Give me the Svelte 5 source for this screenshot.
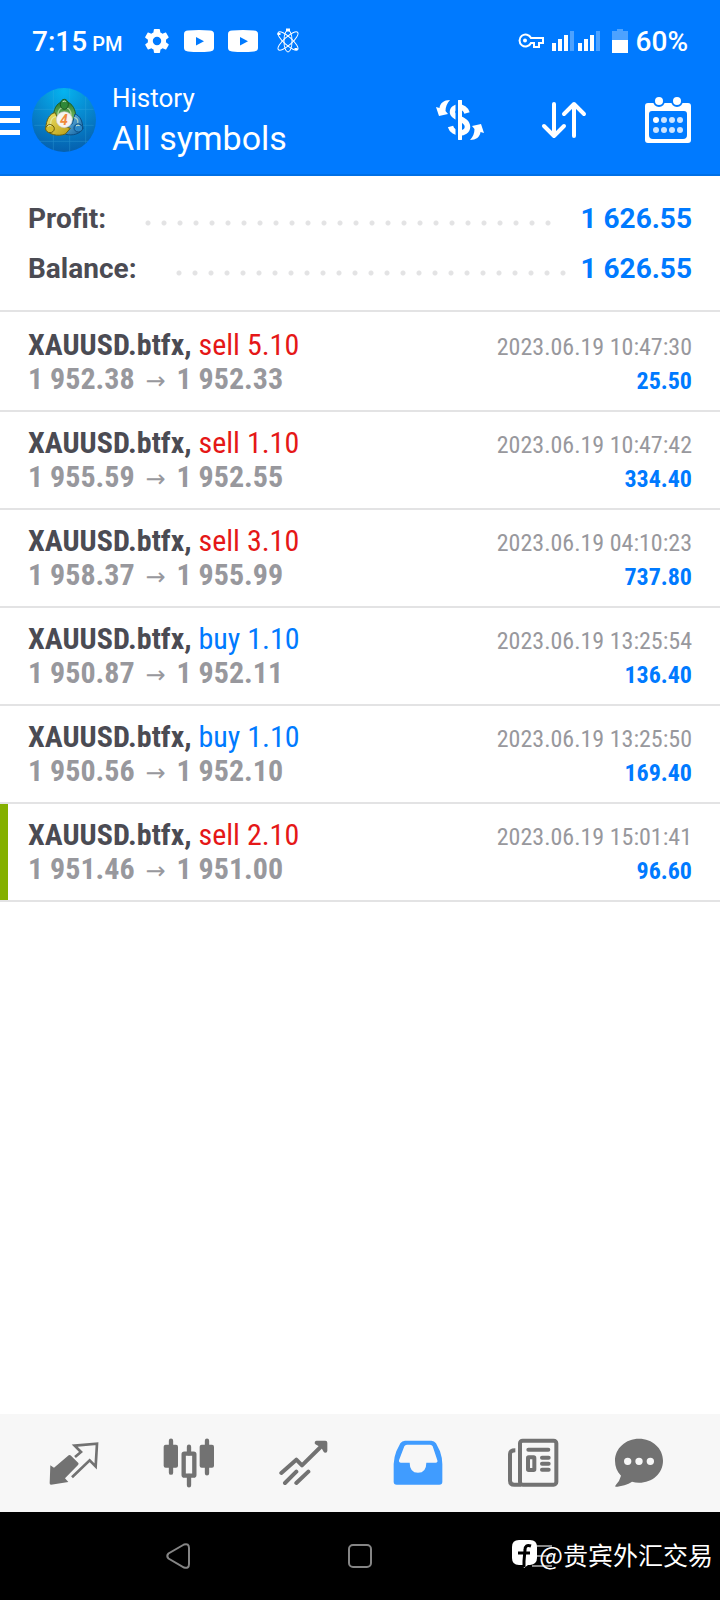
<script lang="ts">
  interface Deal {
    symbol: string;
    side: 'buy' | 'sell';
    volume: string;
    open: string;
    close: string;
    time: string;
    profit: string;
    marked?: boolean;
  }

  const DOT_STEP = 16;

  const totals = [
    { label: 'Profit:', value: '1 626.55', dots: 26 },
    { label: 'Balance:', value: '1 626.55', dots: 25 },
  ];

  const deals: Deal[] = [
    { symbol: 'XAUUSD.btfx', side: 'sell', volume: '5.10', open: '1 952.38', close: '1 952.33', time: '2023.06.19 10:47:30', profit: '25.50' },
    { symbol: 'XAUUSD.btfx', side: 'sell', volume: '1.10', open: '1 955.59', close: '1 952.55', time: '2023.06.19 10:47:42', profit: '334.40' },
    { symbol: 'XAUUSD.btfx', side: 'sell', volume: '3.10', open: '1 958.37', close: '1 955.99', time: '2023.06.19 04:10:23', profit: '737.80' },
    { symbol: 'XAUUSD.btfx', side: 'buy', volume: '1.10', open: '1 950.87', close: '1 952.11', time: '2023.06.19 13:25:54', profit: '136.40' },
    { symbol: 'XAUUSD.btfx', side: 'buy', volume: '1.10', open: '1 950.56', close: '1 952.10', time: '2023.06.19 13:25:50', profit: '169.40' },
    { symbol: 'XAUUSD.btfx', side: 'sell', volume: '2.10', open: '1 951.46', close: '1 951.00', time: '2023.06.19 15:01:41', profit: '96.60', marked: true },
  ];

  const tabs = ['Quotes', 'Charts', 'Trade', 'History', 'News', 'Messages'];
  let activeTab = $state('History');
</script>

<div class="screen">
  <header>
    <div class="status">
      <div class="status-left">
        <span class="clock">7:15<small>PM</small></span>
        <svg width="26" height="26" viewBox="1.2 1.2 21.6 21.6" fill="#fff" aria-hidden="true">
          <path d="M19.4 13c0-.3.1-.6.1-1s0-.7-.1-1l2.1-1.7c.2-.1.3-.4.1-.6l-2-3.5c-.1-.2-.4-.3-.6-.2l-2.5 1c-.5-.4-1.1-.7-1.7-1l-.4-2.6c0-.2-.2-.4-.5-.4h-4c-.2 0-.5.2-.5.4l-.4 2.6c-.6.3-1.2.6-1.7 1l-2.5-1c-.2-.1-.5 0-.6.2l-2 3.5c-.1.2-.1.5.1.6L4.5 11c0 .3-.1.6-.1 1s0 .7.1 1l-2.1 1.7c-.2.1-.3.4-.1.6l2 3.5c.1.2.4.3.6.2l2.5-1c.5.4 1.1.7 1.7 1l.4 2.6c0 .2.3.4.5.4h4c.3 0 .5-.2.5-.4l.4-2.6c.6-.3 1.2-.6 1.7-1l2.5 1c.2.1.5 0 .6-.2l2-3.5c.1-.2.1-.5-.1-.6L19.4 13zM12 15.5a3.5 3.5 0 1 1 0-7 3.5 3.5 0 0 1 0 7z" />
        </svg>
        {#each [0, 1] as n (n)}
          <svg width="30" height="22" viewBox="0 0 30 22" aria-hidden="true">
            <path d="M4 .5Q15-.5 26 .5Q30 .8 30 4V18Q30 21 26 21.5Q15 22.500 4 21.500Q0 21 0 18V4Q0 .8 4 .5ZM12 7V15.500L20 11.200Z" fill="#fff" />
          </svg>
        {/each}
        <svg class="atom" width="24" height="26" viewBox="0 0 24 26" fill="none" stroke="#fff" aria-hidden="true">
          <ellipse cx="12" cy="13" rx="4" ry="11" />
          <ellipse cx="12" cy="13" rx="4" ry="13" transform="rotate(48 12 13)" />
          <ellipse cx="12" cy="13" rx="4" ry="13" transform="rotate(-48 12 13)" />
          <path d="M10 2h4M3 5v2M20 20v2" stroke-width="3" />
        </svg>
      </div>
      <div class="status-right">
        <svg width="26" height="16" viewBox="0 0 26 16" fill="none" stroke="#fff" stroke-width="2" aria-hidden="true">
          <path d="M13 5A6 6 0 1 0 13 10H16V14H21V10H25V5Z" />
          <circle cx="7" cy="7.5" r="2" fill="#fff" stroke="none" />
        </svg>
        <svg width="48" height="20" viewBox="0 0 48 20" fill="#fff" aria-hidden="true">
          <path d="M0 12h4v8H0zM6 8h4v12H6zM12 4h4v16h-4zM26 12h4v8h-4zM32 8h4v12h-4zM38 4h4v16h-4z" />
          <path d="M18 0h4v20h-4zM44 0h4v20h-4z" opacity=".3" />
        </svg>
        <svg class="battery" width="16" height="24" viewBox="0 0 16 24" fill="#fff" aria-hidden="true">
          <path d="M5 0h6v2h5v9H0V2h5z" opacity=".3" />
          <path d="M0 11h16v13H0z" />
        </svg>
        <span>60%</span>
      </div>
    </div>

    <div class="toolbar">
      <button class="menu" aria-label="Menu">
        <svg width="20" height="30" viewBox="0 0 20 30" fill="#fff">
          <path d="M0 1h20v5H0zM0 13h20v5H0zM0 25h20v5H0z" />
        </svg>
      </button>
      <svg class="logo" width="64" height="64" viewBox="96 264 192 192" aria-hidden="true">
        <defs>
          <radialGradient id="sky" cx="50%" cy="5%" r="95%">
            <stop offset="0" stop-color="#05b4f0" />
            <stop offset="0.45" stop-color="#078cd2" />
            <stop offset="1" stop-color="#0560ae" />
          </radialGradient>
          <linearGradient id="green" x2="0" y2="1">
            <stop offset="0" stop-color="#2c7d32" />
            <stop offset="1" stop-color="#8ccb6a" />
          </linearGradient>
          <linearGradient id="yellow" x2="1" y2="1">
            <stop offset="0" stop-color="#f0e46a" />
            <stop offset="1" stop-color="#b89c14" />
          </linearGradient>
          <linearGradient id="blue" x2="1" y2="1">
            <stop offset="0" stop-color="#7fd0f5" />
            <stop offset="1" stop-color="#0d5c9c" />
          </linearGradient>
        </defs>
        <circle cx="192" cy="360" r="96" fill="url(#sky)" />
        <path d="M160 270V450M209 266V454M257 290V430M103 328H281M103 376H281M120 424H264" stroke="#46b3e6" stroke-width="2" opacity=".4" />
        <path d="M163 359C157 340 165 314 182 307H205C222 316 230 338 225 358L193 370Z" fill="url(#green)" stroke="#1d5f27" stroke-width="3" />
        <path d="M225 342C241 348 247 362 249 386C240 402 218 408 197 403L181 385L217 371Z" fill="url(#blue)" stroke="#0c4d83" stroke-width="3" />
        <path d="M166 338C148 341 139 358 137 387C145 403 173 411 196 402L211 385L180 375Z" fill="url(#yellow)" stroke="#6b620f" stroke-width="3" />
        <path d="M174 346C173 330 181 322 193 322S214 330 213 346M152 372C151 360 158 351 168 350M233 369C235 360 230 354 222 352" stroke="#e6f5c8" stroke-width="4" opacity=".6" fill="none" />
        <ellipse cx="193" cy="313" rx="12" ry="15" fill="#2f8838" stroke="#195924" stroke-width="3" />
        <ellipse cx="150" cy="386" rx="13" ry="12" fill="#d3bd32" stroke="#665a10" stroke-width="3" />
        <ellipse cx="235" cy="384" rx="13" ry="12" fill="#2b87c7" stroke="#0c4d83" stroke-width="3" />
        <path d="M188 305q5-4 9 0M143 379q6-5 11-1M228 378q6-5 11-1" stroke="#dff3d0" stroke-width="3" fill="none" />
        <circle cx="193" cy="359" r="24" fill="#f5f4f1" stroke="#c9c9c9" stroke-width="2" />
        <text x="192" y="374" text-anchor="middle" class="logo-digit">4</text>
      </svg>
      <h1><span>History</span>All symbols</h1>

      <button aria-label="Swap currency">
        <svg width="48" height="40" viewBox="76 100 48 40">
          <path d="M107 113C105 105 92 105 92.500 112.500C93 119 107.500 118 107.500 127C107 135 93 135 90.500 126.500" fill="none" stroke="#fff" stroke-width="5.5" />
          <path d="M97 100v40" stroke="#007aff" stroke-width="3" />
          <path d="M100 101v38" stroke="#fff" stroke-width="4" stroke-linecap="round" />
          <path id="swap" d="M90 100C84 100 80 103 79.500 108L76 107L79 116L88 114L85.500 111C85.500 107 87 103 90 100Z" fill="#fff" />
          <use href="#swap" transform="rotate(180 100 120)" />
        </svg>
      </button>
      <button aria-label="Sort">
        <svg width="46" height="38" viewBox="181 101 46 38" fill="none" stroke="#fff" stroke-width="4" stroke-linecap="round" stroke-linejoin="round">
          <path d="M194 104v32M184 126l10 10 10-10M214 136v-32M204 114l10-10 10 10" />
        </svg>
      </button>
      <button aria-label="Period">
        <svg width="46" height="46" viewBox="284 96 46 46">
          <path fill-rule="evenodd" d="M287 102H327Q330 102 330 105V139Q330 142 327 142H287Q284 142 284 139V105Q284 102 287 102ZM291 110Q288 110 288 113V134Q288 138 292 138H322Q326 138 326 134V113Q326 110 323 110Z" fill="#fff" />
          <circle cx="298" cy="100" r="5" fill="#fff" stroke="#007aff" stroke-width="2" />
          <circle cx="316" cy="100" r="5" fill="#fff" stroke="#007aff" stroke-width="2" />
          {#each [119, 129] as cy (cy)}
            {#each [295, 303, 311, 319] as cx (cx)}
              <circle {cx} {cy} r="3" fill={cx === 295 && cy === 119 ? '#fff' : '#cce4ff'} />
            {/each}
          {/each}
        </svg>
      </button>
    </div>
  </header>

  <main>
    <dl class="totals">
      {#each totals as row (row.label)}
        <div>
          <dt>{row.label}</dt>
          <dd class="dots" style:width="{row.dots * DOT_STEP}px" aria-hidden="true"></dd>
          <dd>{row.value}</dd>
        </div>
      {/each}
    </dl>

    <ul class="deals">
      {#each deals as deal (deal.time)}
        <li class:marked={deal.marked}>
          <div class="line">
            <strong>{deal.symbol}, <span class={deal.side}>{deal.side} {deal.volume}</span></strong>
            <time>{deal.time}</time>
          </div>
          <div class="line">
            <span class="prices">{deal.open} <i>→</i> {deal.close}</span>
            <span class="profit">{deal.profit}</span>
          </div>
        </li>
      {/each}
    </ul>
  </main>

  <nav class="tabs" aria-label="Sections">
    {#each tabs as tab (tab)}
      <button class:active={tab === activeTab} aria-label={tab} onclick={() => (activeTab = tab)}>
        {#if tab === 'Quotes'}
          <svg width="50" height="50" viewBox="146 82 150 150">
            <path d="M150 164L161 171L205 134Q209 132 212 135L234 157Q236 160 233 163L194 203L204 214L152 222Q148 222 148 218Z" fill="currentColor" />
            <path d="M224 139L242 124L223 105L290 99L286 167L268 149L215 200" fill="none" stroke="currentColor" stroke-width="8" />
          </svg>
        {:else if tab === 'Charts'}
          <svg width="52" height="50" viewBox="488 82 156 150" fill="none" stroke="currentColor" stroke-linecap="round">
            <path d="M512 90v96M620 90v98M566 108v20M566 196v28" stroke-width="13" />
            <rect x="490" y="102" width="43" height="69" rx="6" fill="currentColor" stroke="none" />
            <rect x="598" y="102" width="43" height="69" rx="6" fill="currentColor" stroke="none" />
            <rect x="550" y="129" width="32" height="66" rx="2" stroke-width="13" />
          </svg>
        {:else if tab === 'Trade'}
          <svg width="50" height="50" viewBox="116 82 150 150" fill="none" stroke="currentColor" stroke-width="12" stroke-linecap="round" stroke-linejoin="round">
            <path d="M123 187L168 147L185 164L250 100M168 183L134 217M204 183L168 217" />
            <path d="M229 96H255V120L247 106Z" />
          </svg>
        {:else if tab === 'History'}
          <svg width="50" height="50" viewBox="460 82 150 150">
            <path fill-rule="evenodd" d="M496 90H575Q584 90 589 98L601 122Q608 142 608 160V213Q608 222 599 222H471Q462 222 462 213V160Q463 140 470 122L482 98Q487 90 496 90ZM502 102Q496 102 494 107L478 149Q477 156 484 156H510Q510 186 535 186Q560 186 560 156H588Q595 156 593 149L579 107Q577 102 571 102Z" fill="currentColor" />
          </svg>
        {:else if tab === 'News'}
          <svg width="52" height="50" viewBox="82 82 156 150" fill="none" stroke="currentColor" stroke-width="12">
            <rect x="121" y="90" width="109" height="132" rx="8" />
            <path d="M107 119Q91 119 91 130V210Q91 222 104 222H125" />
            <path d="M146 117H206M187 141H207M187 159H207M187 177H207" stroke-linecap="round" />
            <rect x="145" y="140" width="19" height="38" rx="2" />
          </svg>
        {:else}
          <svg width="68" height="50" viewBox="402 82 204 150">
            <path d="M477 84C517 84 549 113 549 150C549 188 517 216 477 216Q466 216 456 213C444 221 424 228 406 228Q405 225 408 222Q419 211 423 195C411 183 405 168 405 150C405 113 437 84 477 84Z" fill="currentColor" />
            <path d="M443 152h.1M477 152h.1M511 152h.1" stroke="#f7f7f7" stroke-width="22" stroke-linecap="round" />
          </svg>
        {/if}
      </button>
    {/each}
  </nav>

  <div class="system" role="group" aria-label="System navigation">
    <button aria-label="Back">
      <svg width="26" height="28" viewBox="0 0 26 28">
        <path d="M19 2.500L3.500 11.500Q1 14 3.500 16.500L19 25.500Q24 27 24 22V6Q24 1 19 2.500Z" />
      </svg>
    </button>
    <button aria-label="Home">
      <svg width="26" height="26" viewBox="0 0 26 26"><rect x="2" y="2" width="22" height="22" rx="4" /></svg>
    </button>
    <button aria-label="Recent apps">
      <svg width="20" height="26" viewBox="0 0 20 26"><path d="M0 3h20M0 13h20M0 23h20" /></svg>
    </button>
    <div class="watermark">
      <svg width="25" height="28" viewBox="0 0 25 28">
        <path d="M7 0H18Q25 0 25 7V18Q25 24 18 25H16L12 28L11 25H7Q0 25 0 18V7Q0 0 7 0Z" fill="#fff" stroke="none" />
        <path d="M19 6Q13 4 13 10L12 21Q12 25 12 27M6 13H18" stroke="#000" stroke-width="3" fill="none" />
      </svg>
      <span>@贵宾外汇交易</span>
    </div>
  </div>
</div>

<style>
  :global(body) {
    margin: 0;
    background: #fff;
  }

  .screen {
    display: flex;
    flex-direction: column;
    min-height: 100vh;
    font-family: Roboto, sans-serif;
    color: #4b4b53;
  }

  svg {
    display: block;
    flex: none;
  }

  button {
    display: flex;
    align-items: center;
    justify-content: center;
    padding: 0;
    border: 0;
    background: none;
    color: inherit;
    cursor: pointer;
  }

  header {
    background: #007aff;
    border-bottom: 2px solid #0070e6;
    color: #fff;
  }

  .status,
  .status-left,
  .status-right {
    display: flex;
    align-items: center;
  }

  .status {
    justify-content: space-between;
    height: 82px;
    padding: 0 32px;
    font-size: 28px;
    font-weight: 500;
  }

  .status-left {
    gap: 14px;
  }

  .clock {
    display: flex;
    align-items: baseline;
    gap: 5px;
    margin-right: 8px;
  }

  .clock small {
    font-size: 20px;
  }

  .atom {
    margin-left: 4px;
  }

  .status-right {
    gap: 8px;
  }

  .battery {
    margin-left: 4px;
  }

  .toolbar {
    display: flex;
    align-items: center;
    height: 76px;
    padding: 0 26px 16px 0;
  }

  .toolbar button {
    width: 52px;
    height: 52px;
    margin-left: 52px;
  }

  .toolbar .menu {
    width: 20px;
    margin-left: 0;
  }

  .logo {
    margin-left: 12px;
  }

  .logo-digit {
    font-size: 42px;
    font-style: italic;
    font-weight: 700;
    fill: #f08a3c;
  }

  h1 {
    flex: 1;
    margin: 0 0 0 16px;
    font-size: 34px;
    font-weight: 400;
    line-height: 44px;
  }

  h1 span {
    display: block;
    font-size: 26px;
    line-height: 36px;
  }

  main {
    flex: 1;
  }

  .totals {
    margin: 0;
    padding: 17px 28px;
    border-bottom: 2px solid #e3e3e4;
    font-size: 28px;
    font-weight: 700;
  }

  .totals div {
    display: flex;
    align-items: center;
    height: 50px;
  }

  .totals dd {
    margin: 0 0 0 auto;
    color: #007aff;
  }

  .totals .dots {
    flex: 0 1 auto;
    height: 6px;
    margin: 10px 0 0 34px;
    background: radial-gradient(circle, #e3e3e4 2px, transparent 3px) 0 0 / 16px 6px repeat-x;
  }

  .deals {
    margin: 0;
    padding: 2px 0 0;
    list-style: none;
    font-family: 'Roboto Condensed', 'Liberation Sans Narrow', Roboto, sans-serif;
  }

  .deals li {
    padding: 14px 28px;
    border-bottom: 2px solid #e3e3e4;
  }

  .deals .marked {
    box-shadow: inset 8px 0 #84b000;
  }

  .line {
    display: flex;
    align-items: baseline;
    justify-content: space-between;
    height: 34px;
    font-size: 30px;
    line-height: 34px;
    white-space: nowrap;
  }

  .line span {
    font-weight: 700;
  }

  .line .sell,
  .line .buy {
    font-weight: 400;
  }

  .sell {
    color: #e51717;
  }

  .buy {
    color: #007aff;
  }

  time,
  .prices {
    color: #98989d;
  }

  time,
  .profit {
    font-size: 24px;
  }

  .profit {
    color: #007aff;
  }

  .prices i {
    margin: 0 4px;
    font-family: 'Noto Sans', 'DejaVu Sans', sans-serif;
    font-size: 24px;
    font-style: normal;
    font-weight: 400;
    line-height: 24px;
  }

  .tabs {
    display: flex;
    justify-content: space-between;
    padding: 0 32px 0 34px;
    background: #f7f7f7;
    color: #727272;
  }

  .tabs button {
    width: 80px;
    height: 98px;
  }

  .tabs .active {
    color: #409cff;
  }

  .system {
    position: relative;
    display: flex;
    justify-content: center;
    gap: 134px;
    height: 88px;
    background: #000;
  }

  .system button {
    width: 48px;
  }

  .system svg {
    fill: none;
    stroke: #858585;
    stroke-width: 2;
  }

  .watermark {
    position: absolute;
    right: 7px;
    bottom: 30px;
    display: flex;
    align-items: center;
    gap: 2px;
    color: #fff;
    font-family: 'Noto Sans CJK SC', sans-serif;
    font-size: 25px;
    line-height: 32px;
  }
</style>
